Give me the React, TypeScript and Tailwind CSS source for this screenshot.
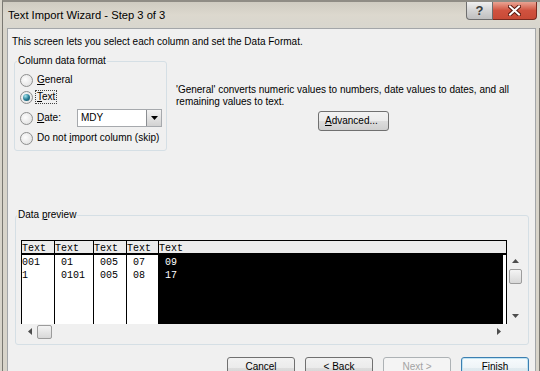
import React from "react";

const ui = "font-['Liberation_Sans',Arial,sans-serif]";
const mono = "font-['Liberation_Mono','Courier_New',monospace]";

const Radio = ({ checked }: { checked?: boolean }) => (
  <span className="flex h-[13px] w-[13px] shrink-0 items-center justify-center rounded-full border border-[#8e8f8f] bg-[radial-gradient(circle_at_40%_40%,#fdfdfd,#dcdcdc)]">
    {checked && (
      <span className="h-[7px] w-[7px] rounded-full bg-[radial-gradient(circle_at_35%_30%,#a8e6ee,#2a8098_50%,#0d4458)]" />
    )}
  </span>
);

const Arrow = ({ dir }: { dir: "up" | "down" | "left" | "right" }) => {
  const pts = {
    up: "0,5 7,5 3.5,1",
    down: "0,1 7,1 3.5,5",
    left: "5,0 5,7 1,3.5",
    right: "1,0 1,7 5,3.5",
  }[dir];
  const vertical = dir === "up" || dir === "down";
  return (
    <svg
      width={vertical ? 7 : 6}
      height={vertical ? 6 : 7}
      viewBox={vertical ? "0 0 7 6" : "0 0 6 7"}
    >
      <polygon points={pts} fill="#4d4d4d" />
    </svg>
  );
};

const Thumb = ({ className }: { className: string }) => (
  <div
    className={`rounded-[2px] border border-[#9c9c9c] bg-linear-to-b from-[#f4f4f4] to-[#d8d8d8] ${className}`}
  />
);

const columns = [
  { w: "w-[33px]", rows: ["001", "1"] },
  { w: "w-[39px]", rows: [" 01", " 0101"] },
  { w: "w-[33px]", rows: [" 005", " 005"] },
  { w: "w-[32px]", rows: [" 07", " 08"] },
];

const buttons = [
  { label: "Cancel", kind: "normal" },
  { label: "< Back", kind: "normal" },
  { label: "Next >", kind: "disabled" },
  { label: "Finish", kind: "default" },
];

const buttonStyle: Record<string, string> = {
  normal:
    "border-[#707070] bg-[linear-gradient(#f2f2f2_0%,#ebebeb_50%,#dddddd_50%,#cfcfcf_100%)] text-black",
  disabled: "border-[#adb2b5] bg-[#f4f4f4] text-[#a3a3a3]",
  default:
    "border-[#3c7fb1] bg-[linear-gradient(#f7fbfd_0%,#eef4f7_50%,#e1ebf0_50%,#d6e4ea_100%)] text-black shadow-[inset_0_0_0_1px_#bfe3f3]",
};

export default function App() {
  return (
    <div
      className={`flex h-[371px] w-[540px] flex-col overflow-hidden bg-[#d8d4ca] pl-[2px] ${ui}`}
    >
      <div className="flex flex-1 flex-col border-l border-t-2 border-[#7a7872] border-t-[#8f8c85]">
        {/* title bar */}
        <div className="flex h-[26px] items-start bg-linear-to-b from-[#cfcbc1] via-[#dcd8ce] to-[#d8d6ce]">
          <span className="pl-[5px] pt-[6px] text-[11.2px] leading-[14px] text-black">
            Text Import Wizard - Step 3 of 3
          </span>
          <div className="ml-auto mr-[3px] flex h-[18px]">
            <div className="flex w-[27px] items-center justify-center rounded-bl-[4px] border border-t-0 border-[#6e6e6e] bg-linear-to-b from-[#f0f0f0] via-[#d4d4d4] to-[#bfbfbf] text-[13px] font-bold leading-none text-[#3c3c3c]">
              ?
            </div>
            <div className="flex w-[44px] items-center justify-center rounded-br-[4px] border border-l-0 border-t-0 border-[#7a2a20] bg-linear-to-b from-[#e9a393] via-[#d0523f] to-[#c84a36]">
              <svg width="13" height="11" viewBox="0 0 13 11">
                <path
                  d="M2 1.5 L11 9.5 M11 1.5 L2 9.5"
                  stroke="#5a1a10"
                  strokeWidth="4"
                  strokeLinecap="square"
                />
                <path
                  d="M2 1.5 L11 9.5 M11 1.5 L2 9.5"
                  stroke="#ffffff"
                  strokeWidth="2"
                  strokeLinecap="square"
                />
              </svg>
            </div>
          </div>
        </div>

        <div className="flex flex-1">
          <div className="w-[4px]" />
          {/* client area */}
          <div className="flex w-[529px] flex-col border border-b-0 border-[#a3a6a9] bg-[#f0f0f0] text-[10px] leading-[12px] text-black">
            <p className="ml-[4px] mt-[7px]">
              This screen lets you select each column and set the Data Format.
            </p>

            <div className="mt-[7px] flex">
              <fieldset className="ml-[6px] h-[96px] w-[153px] rounded-[3px] border border-[#d5dfe5] pl-[5px]">
                <legend className="-ml-[3px] px-[1px]">Column data format</legend>
                <div className="flex flex-col pt-[6px]">
                  <label className="flex h-[14px] items-center gap-[4px]">
                    <Radio />
                    <span>
                      <u>G</u>eneral
                    </span>
                  </label>
                  <label className="mt-[3px] flex h-[14px] items-center gap-[2px]">
                    <Radio checked />
                    <span className="border border-dotted border-[#444] px-[1px] leading-[12px]">
                      <u>T</u>ext
                    </span>
                  </label>
                  <label className="mt-[5px] flex h-[18px] items-center gap-[4px]">
                    <Radio />
                    <span className="w-[36px]">
                      <u>D</u>ate:
                    </span>
                    <div className="flex h-[18px] w-[85px] border border-[#a6a9ad] bg-white">
                      <span className="flex-1 pl-[3px] leading-[16px]">MDY</span>
                      <div className="flex w-[15px] items-center justify-center border-l border-[#8b8e92] bg-linear-to-b from-[#f3f3f3] to-[#d2d2d2]">
                        <svg width="7" height="4" viewBox="0 0 7 4">
                          <polygon points="0,0 7,0 3.5,4" fill="#000" />
                        </svg>
                      </div>
                    </div>
                  </label>
                  <label className="mt-[4px] flex h-[14px] items-center gap-[4px]">
                    <Radio />
                    <span>
                      Do not <u>i</u>mport column (skip)
                    </span>
                  </label>
                </div>
              </fieldset>

              <div className="ml-[9px] mt-[29px] flex flex-col">
                <p>
                  'General' converts numeric values to numbers, date values to dates, and all
                  <br />
                  remaining values to text.
                </p>
                <button className="ml-[142px] mt-[3px] h-[20px] w-[71px] rounded-[3px] border border-[#707070] bg-[linear-gradient(#f2f2f2_0%,#ebebeb_50%,#dddddd_50%,#cfcfcf_100%)] pl-[6px] text-left text-[10px]">
                  <u>A</u>dvanced...
                </button>
              </div>
            </div>

            <fieldset className="ml-[7px] mt-[58px] h-[136px] w-[514px] rounded-[3px] border border-[#d5dfe5] pl-[5px]">
              <legend className="-ml-[4px] px-[1px]">
                Data <u>p</u>review
              </legend>
              <div className="flex pt-[19px]">
                <div className="flex flex-col">
                  <div className={`flex h-[84px] w-[486px] border-t border-black text-[10px] ${mono}`}>
                    {columns.map((c, i) => (
                      <div key={i} className={`flex flex-col border-l border-black ${c.w}`}>
                        <div className="h-[14px] border-b-2 border-black bg-[#ececec] pt-[2px] leading-[11px]">Text</div>
                        <div className="flex-1 bg-white pt-[1px] leading-[13px]">
                          {c.rows.map((r) => (
                            <div key={r} className="whitespace-pre">
                              {r}
                            </div>
                          ))}
                        </div>
                      </div>
                    ))}
                    <div className="flex w-[349px] flex-col border-x border-black">
                      <div className="h-[14px] border-b-2 border-black bg-[#ececec] pt-[2px] leading-[11px]">Text</div>
                      <div className="flex flex-1 bg-white">
                        <div className="mr-[3px] flex-1 bg-black pt-[1px] leading-[13px] text-white">
                          <div className="whitespace-pre"> 09</div>
                          <div className="whitespace-pre"> 17</div>
                        </div>
                      </div>
                    </div>
                  </div>
                  {/* horizontal scrollbar */}
                  <div className="flex h-[15px] items-center">
                    <div className="ml-[6px] flex w-[6px] justify-center">
                      <Arrow dir="left" />
                    </div>
                    <Thumb className="ml-[4px] h-[14px] w-[15px]" />
                    <div className="ml-auto mr-[5px] flex w-[6px] justify-center">
                      <Arrow dir="right" />
                    </div>
                  </div>
                </div>
                {/* vertical scrollbar */}
                <div className="ml-[1px] mt-[14px] flex h-[69px] w-[15px] flex-col items-center">
                  <div className="flex h-[14px] items-center">
                    <Arrow dir="up" />
                  </div>
                  <Thumb className="mt-[1px] h-[15px] w-[13px]" />
                  <div className="mt-auto flex h-[14px] items-center">
                    <Arrow dir="down" />
                  </div>
                </div>
              </div>
            </fieldset>

            <div className="mt-[12px] flex justify-end gap-[10px] pr-[6px]">
              {buttons.map((b) => (
                <button
                  key={b.label}
                  className={`h-[22px] w-[68px] rounded-[3px] border pb-[3px] text-[10px] ${buttonStyle[b.kind]}`}
                >
                  {b.label}
                </button>
              ))}
            </div>
          </div>
          <div className="flex-1 border-r border-[#7a7872]" />
        </div>
      </div>
    </div>
  );
}
